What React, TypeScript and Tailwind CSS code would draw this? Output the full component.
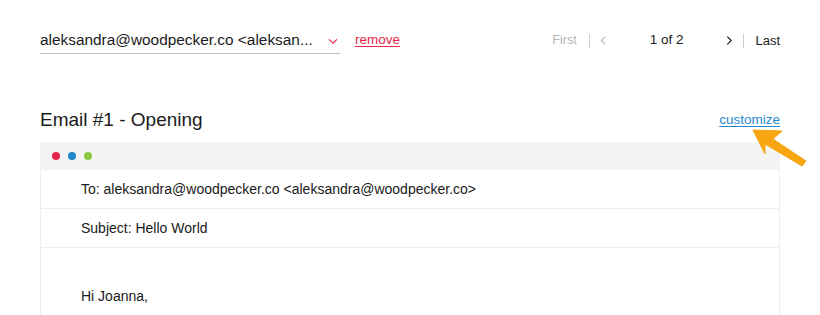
import React from 'react';

const font = { fontFamily: '"Liberation Sans", Arial, sans-serif' };

const Chevron: React.FC<{ dir: 'left' | 'right' | 'down'; className?: string }> = ({ dir, className }) => {
  const d = dir === 'left' ? 'M6 1 L1.5 5.5 L6 10' : dir === 'right' ? 'M1.5 1 L6 5.5 L1.5 10' : 'M1 1.5 L5.5 6 L10 1.5';
  const vb = dir === 'down' ? '0 0 11 8' : '0 0 8 11';
  return (
    <svg viewBox={vb} className={className} fill="none" stroke="currentColor" strokeWidth={1.3}>
      <path d={d} />
    </svg>
  );
};

export default function App() {
  return (
    <div className="w-[820px] h-[315px] bg-white overflow-hidden text-[#1a1a1a]" style={font}>
      {/* top bar */}
      <div className="flex items-center justify-between pl-10 pr-10 pt-[29px]">
        <div className="flex items-center">
          <div className="w-[300px] h-[25px] border-b border-[#bdbdbd] flex items-start justify-between">
            <span className="text-[15.4px] leading-[22px] text-[#1a1a1a]">aleksandra@woodpecker.co &lt;aleksan...</span>
            <Chevron dir="down" className="w-[10px] h-[7px] text-[#e8264a] mt-[9px] mr-[2px]" />
          </div>
          <a className="ml-[15px] -mt-[3px] text-[13.5px] text-[#e8264a] underline underline-offset-2">remove</a>
        </div>
        <div className="flex items-center text-[13px] h-[25px] -mt-[2px]">
          <span className="text-[#b5b5b5] text-[12.5px]">First</span>
          <span className="w-px h-[14px] bg-[#d0d0d0] ml-[12px]" />
          <Chevron dir="left" className="w-[7px] h-[11px] text-[#b5b5b5] ml-[10px]" />
          <span className="ml-[43px] text-[#1a1a1a] text-[13.5px]">1 of 2</span>
          <Chevron dir="right" className="w-[7px] h-[11px] text-[#1a1a1a] ml-[43px]" />
          <span className="w-px h-[14px] bg-[#d0d0d0] ml-[10px]" />
          <span className="ml-[11px] text-[#1a1a1a]">Last</span>
        </div>
      </div>

      {/* email section */}
      <div className="px-10 mt-[47px]">
        <div className="relative flex items-end justify-between h-[30px]">
          <h2 className="text-[19px] leading-[26px] text-[#1a1a1a] -mb-[2px]">Email #1 - Opening</h2>
          <a className="text-[13.5px] text-[#2a8ad0] underline underline-offset-2 mb-[1px]">customize</a>
          <svg viewBox="0 0 60 40" className="absolute left-[711px] top-[27px] w-[60px] h-[40px]">
            <polygon points="2,2 31,3 22,11 55,33 51,38 14,16 14,26" fill="#f7a511" stroke="#f7a511" strokeWidth={1} strokeLinejoin="round" />
          </svg>
        </div>

        <div className="mt-[11px] border-x border-[#eeeeee]">
          <div className="h-[28px] bg-[#f4f4f4] flex items-center gap-[8px] pl-[12px] -mx-px">
            <span className="w-[8px] h-[8px] rounded-full bg-[#e8264a]" />
            <span className="w-[8px] h-[8px] rounded-full bg-[#2486cb]" />
            <span className="w-[8px] h-[8px] rounded-full bg-[#8cc63f]" />
          </div>
          <div className="h-[39px] border-b border-[#eeeeee] flex items-center pl-10 text-[14px]">
            To: aleksandra@woodpecker.co &lt;aleksandra@woodpecker.co&gt;
          </div>
          <div className="h-[39px] border-b border-[#eeeeee] flex items-center pl-10 text-[14px]">
            Subject: Hello World
          </div>
          <div className="pl-10 pt-[38px] pb-10 text-[14px]">Hi Joanna,</div>
        </div>
      </div>
    </div>
  );
}
